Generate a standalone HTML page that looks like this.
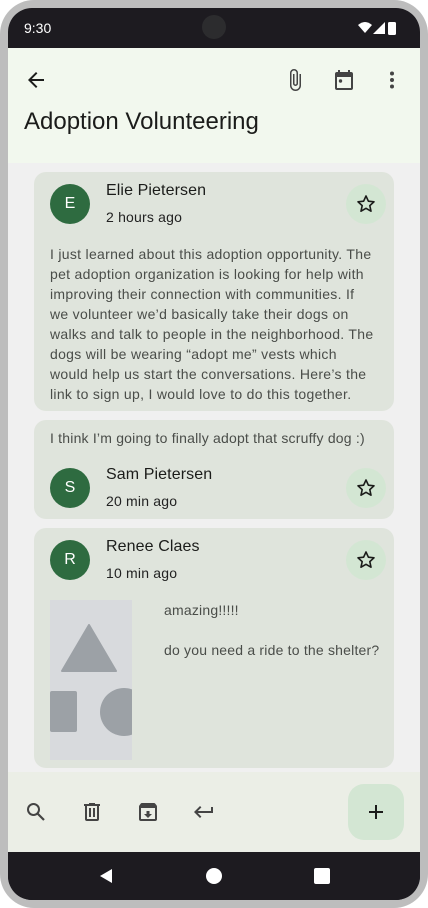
<!DOCTYPE html>
<html><head><meta charset="utf-8"><style>
*{margin:0;padding:0;box-sizing:border-box}
body{width:428px;height:908px;background:#fff;font-family:"Liberation Sans",sans-serif;position:relative;overflow:hidden}
.frame{position:absolute;left:0;top:0;width:428px;height:908px;background:#bdbdbd;border-radius:34px}
.screen{position:absolute;left:8px;top:8px;width:412px;height:892px;background:#1d1b20;border-radius:24px;overflow:hidden}
.abs{position:absolute}
.status{left:0;top:0;width:412px;height:40px;color:#fff;font-size:14px}
.appbar{left:0;top:40px;width:412px;height:115px;background:#f2f8ee}
.content{left:0;top:155px;width:412px;height:609px;background:#f0f0f0}
.card{position:absolute;left:26px;width:360px;background:#dfe4dc;border-radius:12px}
.av{position:absolute;width:40px;height:40px;border-radius:50%;background:#2e6b40;color:#fff;font-size:16px;text-align:center;line-height:40px}
.name{position:absolute;font-size:16px;color:#1b1c1a;letter-spacing:.1px}
.time{position:absolute;font-size:14px;color:#222;letter-spacing:.2px}
.star{position:absolute;width:40px;height:40px;border-radius:50%;background:#d3e6d3}
.body{position:absolute;font-size:14px;line-height:20px;color:#4a4d49;letter-spacing:.2px;white-space:nowrap}
.bottom{left:0;top:764px;width:412px;height:80px;background:#ebeee6}
.nav{left:0;top:844px;width:412px;height:48px;background:#1d1b20}
</style></head><body>
<div class="frame"></div>
<div class="screen">
 <div class="abs status">
  <div class="abs" style="left:16px;top:12px">9:30</div>
  <div class="abs" style="left:194px;top:7px;width:24px;height:24px;border-radius:50%;background:#2c2c2e"></div>
  <svg class="abs" style="left:350px;top:13px" width="46" height="14" viewBox="0 0 46 14"><path d="M0 4 Q7 -2 14 4 L7 12Z" fill="#fff"/><path d="M15 13 L27 1 V13Z" fill="#fff"/><rect x="30" y="1" width="8" height="13" rx="1.5" fill="#fff"/></svg>
 </div>
 <div class="abs appbar">
  <svg class="abs" style="left:16px;top:20px" width="24" height="24" viewBox="0 0 24 24"><path d="M20 11H7.8l5.6-5.6L12 4l-8 8 8 8 1.4-1.4L7.8 13H20z" fill="#1b1c1a"/></svg>
  <svg class="abs" style="left:275px;top:20px" width="24" height="24" viewBox="0 0 24 24"><path d="M16.5 6v11.5a4 4 0 0 1-8 0V5a2.5 2.5 0 0 1 5 0v10.5a1 1 0 0 1-2 0V6H10v9.5a2.5 2.5 0 0 0 5 0V5a4 4 0 0 0-8 0v12.5a5.5 5.5 0 0 0 11 0V6z" fill="#444"/></svg>
  <svg class="abs" style="left:324px;top:20px" width="24" height="24" viewBox="0 0 24 24"><path d="M19 4h-1V2h-2v2H8V2H6v2H5a2 2 0 0 0-2 2v14a2 2 0 0 0 2 2h14a2 2 0 0 0 2-2V6a2 2 0 0 0-2-2zm0 16H5V9h14z" fill="#444"/><circle cx="8.5" cy="13" r="1.7" fill="#444"/></svg>
  <svg class="abs" style="left:372px;top:20px" width="24" height="24" viewBox="0 0 24 24"><circle cx="12" cy="5.5" r="2" fill="#444"/><circle cx="12" cy="12" r="2" fill="#444"/><circle cx="12" cy="18.5" r="2" fill="#444"/></svg>
  <div class="abs" style="left:16px;top:60px;font-size:24px;color:#1b1c1a">Adoption Volunteering</div>
 </div>
 <div class="abs content">
  <div class="card" style="top:9px;height:239px">
   <div class="av" style="left:16px;top:12px">E</div>
   <div class="name" style="left:72px;top:10px">Elie Pietersen</div>
   <div class="time" style="left:72px;top:37px">2 hours ago</div>
   <div class="star" style="left:312px;top:12px"></div>
   <div class="body" style="left:16px;top:72px;letter-spacing:.3px">I just learned about this adoption opportunity. The<br>pet adoption organization is looking for help with<br>improving their connection with communities. If<br>we volunteer we’d basically take their dogs on<br>walks and talk to people in the neighborhood. The<br>dogs will be wearing “adopt me” vests which<br>would help us start the conversations. Here’s the<br>link to sign up, I would love to do this together.</div>
  </div>
  <div class="card" style="top:257px;height:99px">
   <div class="body" style="left:16px;top:8px">I think I’m going to finally adopt that scruffy dog :)</div>
   <div class="av" style="left:16px;top:48px">S</div>
   <div class="name" style="left:72px;top:46px">Sam Pietersen</div>
   <div class="time" style="left:72px;top:73px">20 min ago</div>
   <div class="star" style="left:312px;top:48px"></div>
  </div>
  <div class="card" style="top:365px;height:240px">
   <div class="av" style="left:16px;top:12px">R</div>
   <div class="name" style="left:72px;top:10px">Renee Claes</div>
   <div class="time" style="left:72px;top:37px">10 min ago</div>
   <div class="star" style="left:312px;top:12px"></div>
   <svg class="abs" style="left:16px;top:72px" width="82" height="160" viewBox="0 0 82 160"><rect width="82" height="160" fill="#d8dadd"/><path d="M39 25 L66 71 H12Z" fill="#9ca1a6" stroke="#9ca1a6" stroke-linejoin="round" stroke-width="2"/><rect x="0" y="91" width="27" height="41" rx="2" fill="#9ca1a6"/><circle cx="74" cy="112" r="24" fill="#9ca1a6"/></svg>
   <div class="body" style="left:130px;top:72px">amazing!!!!!</div>
   <div class="body" style="left:130px;top:112px">do you need a ride to the shelter?</div>
  </div>
 </div>
 <div class="abs bottom">
  <svg class="abs" style="left:16px;top:28px" width="24" height="24" viewBox="0 0 24 24"><circle cx="9.5" cy="9.5" r="5.5" fill="none" stroke="#444" stroke-width="2"/><path d="M13.5 13.5 L20 20" stroke="#444" stroke-width="2.2"/></svg>
  <svg class="abs" style="left:72px;top:28px" width="24" height="24" viewBox="0 0 24 24"><path d="M15 4V3H9v1H4v2h1v13a2 2 0 0 0 2 2h10a2 2 0 0 0 2-2V6h1V4zm2 15H7V6h10zM9 8h2v9H9zm4 0h2v9h-2z" fill="#444"/></svg>
  <svg class="abs" style="left:128px;top:28px" width="24" height="24" viewBox="0 0 24 24"><path d="M20.5 5.2 19.1 3.5A1.5 1.5 0 0 0 18 3H6a1.5 1.5 0 0 0-1.2.5L3.5 5.2A2 2 0 0 0 3 6.5V19a2 2 0 0 0 2 2h14a2 2 0 0 0 2-2V6.5a2 2 0 0 0-.5-1.3zM5 19V8h14v11zm7-1 4-4h-2.5v-3h-3v3H8z" fill="#444"/></svg>
  <svg class="abs" style="left:184px;top:28px" width="24" height="24" viewBox="0 0 24 24"><path d="M19 7v4H5.8l3.6-3.6L8 6l-6 6 6 6 1.4-1.4L5.8 13H21V7z" fill="#444"/></svg>
  <div class="abs" style="left:340px;top:12px;width:56px;height:56px;border-radius:16px;background:#d3e6d3"></div>
  <svg class="abs" style="left:356px;top:28px" width="24" height="24" viewBox="0 0 24 24"><path d="M19 13h-6v6h-2v-6H5v-2h6V5h2v6h6z" fill="#1b1c1a"/></svg>
 </div>
 <div class="abs nav">
  <svg class="abs" style="left:90px;top:16px" width="16" height="16" viewBox="0 0 16 16"><path d="M14 1V15L2 8Z" fill="#fff"/></svg>
  <div class="abs" style="left:198px;top:16px;width:16px;height:16px;border-radius:50%;background:#fff"></div>
  <div class="abs" style="left:306px;top:16px;width:16px;height:16px;border-radius:2px;background:#fff"></div>
 </div>
</div>
<svg class="abs" style="left:0;top:0;position:absolute" width="428" height="908">
 <g fill="none" stroke="#1b1c1a" stroke-width="1.6" stroke-linejoin="round">
  <path d="M366 196 l2.4 5.2 5.6.6-4.2 3.8 1.2 5.6-5-2.9-5 2.9 1.2-5.6-4.2-3.8 5.6-.6z"/>
  <path d="M366 480 l2.4 5.2 5.6.6-4.2 3.8 1.2 5.6-5-2.9-5 2.9 1.2-5.6-4.2-3.8 5.6-.6z"/>
  <path d="M366 552 l2.4 5.2 5.6.6-4.2 3.8 1.2 5.6-5-2.9-5 2.9 1.2-5.6-4.2-3.8 5.6-.6z"/>
 </g>
</svg>
</body></html>
